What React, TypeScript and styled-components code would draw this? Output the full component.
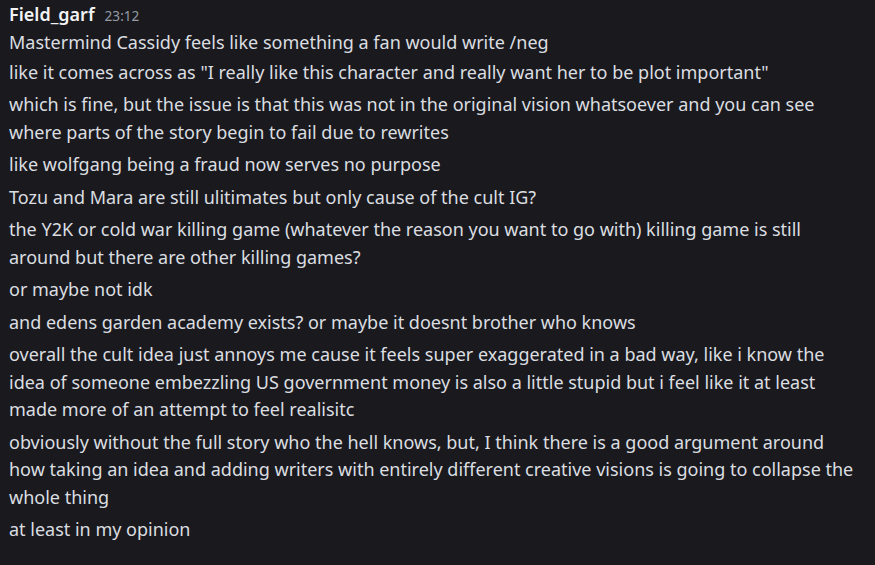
import React from "react"
import styled, { createGlobalStyle } from "styled-components"

const messages = [
  "Mastermind Cassidy feels like something a fan would write /neg",
  `like it comes across as "I really like this character and really want her to be plot important"`,
  "which is fine, but the issue is that this was not in the original vision whatsoever and you can see where parts of the story begin to fail due to rewrites",
  "like wolfgang being a fraud now serves no purpose",
  "Tozu and Mara are still ulitimates but only cause of the cult IG?",
  "the Y2K or cold war killing game (whatever the reason you want to go with) killing game is still around but there are other killing games?",
  "or maybe not idk",
  "and edens garden academy exists? or maybe it doesnt brother who knows",
  "overall the cult idea just annoys me cause it feels super exaggerated in a bad way, like i know the idea of someone embezzling US government money is also a little stupid but i feel like it at least made more of an attempt to feel realisitc",
  "obviously without the full story who the hell knows, but, I think there is a good argument around how taking an idea and adding writers with entirely different creative visions is going to collapse the whole thing",
  "at least in my opinion",
]

const Global = createGlobalStyle`
  html, body {
    margin: 0;
    background: #1a1a1e;
  }
  body {
    font-family: "Noto Sans", "Open Sans", sans-serif;
    -webkit-font-smoothing: antialiased;
  }
`

const Chat = styled.div`
  width: 875px;
  height: 565px;
  overflow: hidden;
  box-sizing: border-box;
  padding: 1px 20px 0 9px;
  background: #1a1a1e;
`

const Group = styled.div`
  display: flex;
  flex-direction: column;
  width: 846px;
`

const Header = styled.div`
  display: flex;
  align-items: baseline;
  gap: 10px;
  height: 27.5px;
  line-height: 27.5px;
`

const Username = styled.span`
  font-size: 18px;
  font-weight: 600;
  color: #f2f3f5;
`

const Timestamp = styled.span`
  font-size: 13.6px;
  color: #949ba4;
`

const Content = styled.div<{ $first?: boolean }>`
  padding: ${p => (p.$first ? "0" : "2.5px 0")};
  font-size: 18px;
  line-height: 27.5px;
  color: #dbdee1;
  word-wrap: break-word;
`

export default function App() {
  return <>
    <Global />
    <Chat>
      <Group>
        <Header>
          <Username>Field_garf</Username>
          <Timestamp>23:12</Timestamp>
        </Header>
        {messages.map((text, index) => <Content key={`msg-${index}`} $first={index === 0}>{text}</Content>)}
      </Group>
    </Chat>
  </>
}
